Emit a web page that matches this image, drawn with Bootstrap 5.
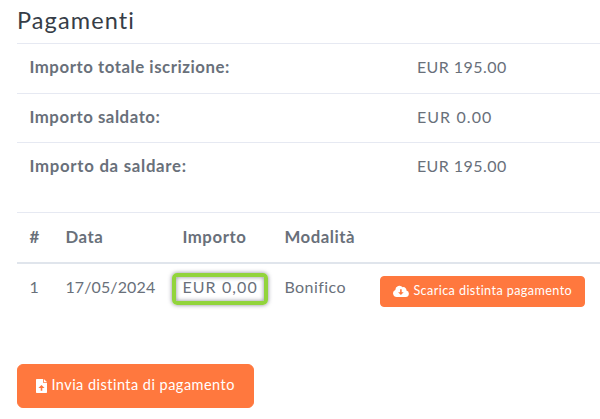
<!DOCTYPE html>
<html lang="it">
<head>
<meta charset="utf-8">
<meta name="viewport" content="width=device-width, initial-scale=1">
<title>Pagamenti</title>
<link href="https://cdn.jsdelivr.net/npm/bootstrap@5.3.0/dist/css/bootstrap.min.css" rel="stylesheet">
<style>
body{font-family:Metropolis,Lato,"Open Sans",sans-serif;font-size:16px;line-height:24px;color:#69707a;background:#fff;letter-spacing:.45px;overflow:hidden}
.page-wrap{padding:6px 0 0 17.4px}
.page-title{font-size:23.5px;line-height:28px;font-weight:400;color:#363d47;letter-spacing:1.1px;margin:0 0 9px -.4px}
.pay-table{--bs-table-color:#69707a;--bs-table-bg:transparent;color:#69707a;table-layout:fixed;border-color:#e6e9f2;margin:0}
.pay-table>:not(caption)>*>*{padding:11px 12px 13px;border-bottom:0;border-top:1px solid #e6e9f2;white-space:nowrap;color:#69707a}
.totals tr{height:49.7px}
.totals{margin-bottom:19.6px}
.totals th,.list th{font-size:16.8px;letter-spacing:.54px}
.totals tr:last-child th{letter-spacing:.72px}
.c-label{width:387.5px}.c-num{width:36px}.c-date{width:117px}.c-amt{width:102px}.c-mode{width:96px}
.pay-table.list>tbody>tr>*{border-top:2px solid #e0e5ec}
.list thead tr{height:50px}
.t-wide{letter-spacing:1.1px}
.t-date{letter-spacing:.12px}
.marked{position:relative}
.marked::after{content:"";position:absolute;left:-10px;top:-4px;width:96px;height:32px;border:4px solid #92d43c;border-radius:5px;box-shadow:0 0 4px rgba(60,60,80,.6),inset 0 0 4px rgba(60,60,80,.6)}
.btn-brand{--bs-btn-color:#fff;--bs-btn-bg:#ff783e;--bs-btn-border-color:#ff783e;--bs-btn-hover-color:#fff;--bs-btn-hover-bg:#f06a30;--bs-btn-hover-border-color:#f06a30;font-family:inherit;white-space:nowrap}
.btn-get{width:205px;height:31px;font-size:12.6px;border-radius:4px;padding:0 0 0 12px;letter-spacing:.42px;margin-top:1px}
.btn-send{width:237px;height:44px;font-size:14.5px;border-radius:6px;padding:0 0 0 18px;margin-top:44.4px;letter-spacing:.47px}
.btn-send span{padding-bottom:2px}
</style>
</head>
<body>
<main class="page-wrap">
  <h1 class="page-title">Pagamenti</h1>
  <table class="table pay-table totals">
    <colgroup><col class="c-label"><col></colgroup>
    <tbody>
      <tr><th scope="row">Importo totale iscrizione:</th><td>EUR 195.00</td></tr>
      <tr><th scope="row">Importo saldato:</th><td class="t-wide">EUR 0.00</td></tr>
      <tr><th scope="row">Importo da saldare:</th><td>EUR 195.00</td></tr>
    </tbody>
  </table>
  <table class="table pay-table list">
    <colgroup><col class="c-num"><col class="c-date"><col class="c-amt"><col class="c-mode"><col></colgroup>
    <thead><tr><th>#</th><th>Data</th><th>Importo</th><th>Modalità</th><th></th></tr></thead>
    <tbody>
      <tr>
        <td>1</td><td class="t-date">17/05/2024</td><td class="t-wide"><span class="marked">EUR 0,00</span></td><td>Bonifico</td>
        <td><a href="#" class="btn btn-brand btn-get d-flex align-items-center">
          <svg class="me-1" width="16" height="13" viewBox="0 0 16 13" aria-hidden="true"><path fill="#fff" d="M13.4 5.6A3 3 0 0 0 9.7 2.2 4.2 4.2 0 0 0 2.3 4.9 3.7 3.7 0 0 0 3.7 12h9.1a3.25 3.25 0 0 0 .6-6.4z"/><path fill="#ff783e" d="M7.1 4.3h1.6v2.9h2L7.9 10.1 5.1 7.2h2z"/></svg><span>Scarica distinta pagamento</span></a></td>
      </tr>
    </tbody>
  </table>
  <a href="#" class="btn btn-brand btn-send d-flex align-items-center">
    <svg width="11" height="14" viewBox="0 0 11 14" aria-hidden="true"><path fill="#fff" d="M.7 0H7v3.7h4v9.6a.7.7 0 0 1-.7.7H.7a.7.7 0 0 1-.7-.7V.7A.7.7 0 0 1 .7 0zM7.8 0 11 3H7.8z"/><path fill="#ff783e" d="M5.5 5.9 8.6 9H6.3v2.7H4.7V9H2.4z"/></svg><span class="ms-1">Invia distinta di pagamento</span></a>
</main>
<script src="https://cdn.jsdelivr.net/npm/bootstrap@5.3.0/dist/js/bootstrap.bundle.min.js"></script>
</body>
</html>
